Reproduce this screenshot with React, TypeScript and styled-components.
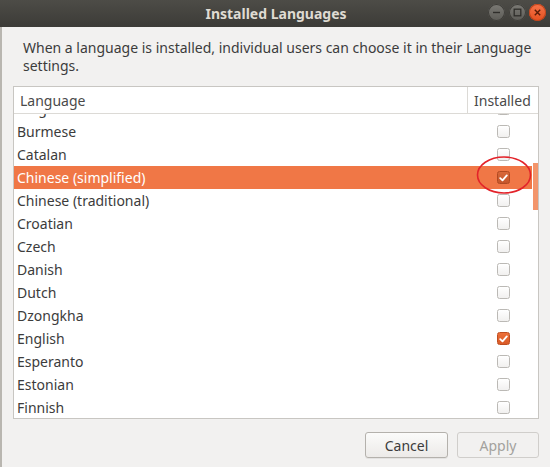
import React from "react";
import styled, { createGlobalStyle } from "styled-components";

const Global = createGlobalStyle`
  html, body { margin: 0; padding: 0; background: #f2f1f0; }
  body { font-family: "Noto Sans", "DejaVu Sans", sans-serif; }
  * { box-sizing: border-box; }
`;

const Window = styled.div`
  width: 550px;
  height: 467px;
  display: flex;
  flex-direction: column;
  background: #f2f1f0;
  overflow: hidden;
`;

const TitleBar = styled.div`
  height: 27px;
  flex: none;
  background: linear-gradient(#4d4c47, #3c3b37);
  display: flex;
  align-items: center;
  justify-content: center;
  position: relative;
`;

const Title = styled.div`
  color: #dfdbd2;
  font-weight: bold;
  font-size: 14px;
  letter-spacing: 0;
  margin-left: 2px;
`;

const Controls = styled.div`
  position: absolute;
  right: 4px;
  top: 4px;
  display: flex;
  gap: 3.5px;
`;

const Ctl = styled.div<{ $close?: boolean }>`
  width: 17px;
  height: 17px;
  border-radius: 50%;
  display: flex;
  align-items: center;
  justify-content: center;
  background: ${(p) =>
    p.$close
      ? "linear-gradient(#f5744a, #e4501f)"
      : "linear-gradient(#7b7a75, #5c5b56)"};
  box-shadow: inset 0 0 0 1px ${(p) => (p.$close ? "#c0441c" : "#3e3d39")};
`;

const Body = styled.div`
  flex: 1;
  display: flex;
  flex-direction: column;
  padding: 12px 11px 9px 11px;
  border-left: 2px solid #b9b6b0;
  min-height: 0;
`;

const Description = styled.p`
  margin: 0 0 11px 10px;
  font-size: 14px;
  line-height: 18px;
  color: #3c3c3c;
`;

const Table = styled.div`
  border: 1px solid #c8c6c2;
  background: #ffffff;
  display: flex;
  flex-direction: column;
  height: 333px;
  flex: none;
`;

const HeaderRow = styled.div`
  display: grid;
  grid-template-columns: 453px 1fr;
  height: 27px;
  border-bottom: 1px solid #dcdad6;
  flex: none;
`;

const HeaderCell = styled.div<{ $divider?: boolean }>`
  display: flex;
  align-items: center;
  padding-left: 6px;
  font-size: 14px;
  color: #4a4a4a;
  border-left: ${(p) => (p.$divider ? "1px solid #dcdad6" : "none")};
`;

const Viewport = styled.div`
  flex: 1;
  display: flex;
  overflow: hidden;
  min-height: 0;
`;

const List = styled.div`
  flex: 1;
  margin-top: -17px;
  margin-right: 1px;
`;

const Row = styled.div<{ $selected?: boolean }>`
  height: 23px;
  display: grid;
  grid-template-columns: 453px 1fr;
  align-items: center;
  background: ${(p) => (p.$selected ? "#f07746" : "transparent")};
  color: ${(p) => (p.$selected ? "#ffffff" : "#3c3c3c")};
  font-size: 14px;
  position: relative;
`;

const Name = styled.div`
  padding-left: 3px;
  white-space: nowrap;
`;

const CheckCell = styled.div`
  display: flex;
  align-items: center;
  padding-left: 30px;
`;

const Box = styled.div<{ $checked?: boolean; $dim?: boolean }>`
  width: 13px;
  height: 13px;
  border-radius: 2.5px;
  display: flex;
  align-items: center;
  justify-content: center;
  background: ${(p) =>
    p.$checked
      ? p.$dim
        ? "linear-gradient(#d8683a, #c5552a)"
        : "linear-gradient(#ec6f38, #d95a27)"
      : "linear-gradient(#ffffff, #f1f0ef)"};
  border: 1px solid
    ${(p) => (p.$checked ? (p.$dim ? "#b04a22" : "#c04d1f") : "#bbb9b5")};
`;

const Track = styled.div`
  width: 5px;
  flex: none;
  display: flex;
  flex-direction: column;
`;

const Thumb = styled.div`
  margin-top: 49px;
  height: 47px;
  background: #f3956b;
`;

const Circle = styled.svg`
  position: absolute;
  left: 461px;
  top: -11px;
  pointer-events: none;
`;

const Footer = styled.div`
  flex: 1;
  display: flex;
  justify-content: flex-end;
  align-items: flex-end;
  gap: 9px;
`;

const Button = styled.button<{ $disabled?: boolean }>`
  width: ${(p) => (p.$disabled ? "82px" : "83px")};
  height: 26px;
  border-radius: 3px;
  font-family: "Noto Sans", "DejaVu Sans", sans-serif;
  font-size: 14px;
  padding: 0;
  color: ${(p) => (p.$disabled ? "#a3a19d" : "#3c3c3c")};
  border: 1px solid ${(p) => (p.$disabled ? "#d0cecb" : "#b4b1ac")};
  background: ${(p) =>
    p.$disabled ? "#f2f1f0" : "linear-gradient(#fbfbfa, #eceae8)"};
  box-shadow: ${(p) => (p.$disabled ? "none" : "0 1px 0 rgba(0,0,0,0.06)")};
`;

const Check = () => (
  <svg width="9" height="8" viewBox="0 0 9 8">
    <path d="M1.2 4.2 L3.5 6.4 L7.8 1.4" fill="none" stroke="#ffffff" strokeWidth="1.8" strokeLinecap="round" strokeLinejoin="round" />
  </svg>
);

const languages: { name: string; checked?: boolean; selected?: boolean }[] = [
  { name: "Bulgarian" },
  { name: "Burmese" },
  { name: "Catalan" },
  { name: "Chinese (simplified)", checked: true, selected: true },
  { name: "Chinese (traditional)" },
  { name: "Croatian" },
  { name: "Czech" },
  { name: "Danish" },
  { name: "Dutch" },
  { name: "Dzongkha" },
  { name: "English", checked: true },
  { name: "Esperanto" },
  { name: "Estonian" },
  { name: "Finnish" },
];

export default function App() {
  return (
    <Window>
      <Global />
      <TitleBar>
        <Title>Installed Languages</Title>
        <Controls>
          <Ctl>
            <svg width="9" height="9" viewBox="0 0 9 9">
              <path d="M1 4.5 H8" stroke="#2f2e2b" strokeWidth="1.4" />
            </svg>
          </Ctl>
          <Ctl>
            <svg width="9" height="9" viewBox="0 0 9 9">
              <rect x="1.2" y="1.2" width="6.6" height="6.6" fill="none" stroke="#2f2e2b" strokeWidth="1.3" />
            </svg>
          </Ctl>
          <Ctl $close>
            <svg width="9" height="9" viewBox="0 0 9 9">
              <path d="M1.8 1.8 L7.2 7.2 M7.2 1.8 L1.8 7.2" stroke="#5a1c08" strokeWidth="1.4" />
            </svg>
          </Ctl>
        </Controls>
      </TitleBar>
      <Body>
        <Description>
          When a language is installed, individual users can choose it in their Language settings.
        </Description>
        <Table>
          <HeaderRow>
            <HeaderCell>Language</HeaderCell>
            <HeaderCell $divider>Installed</HeaderCell>
          </HeaderRow>
          <Viewport>
            <List>
              {languages.map((l) => (
                <Row key={l.name} $selected={l.selected}>
                  <Name>{l.name}</Name>
                  <CheckCell>
                    <Box $checked={l.checked} $dim={l.selected}>
                      {l.checked && <Check />}
                    </Box>
                  </CheckCell>
                  {l.selected && (
                    <Circle width="58" height="40" viewBox="0 0 58 40">
                      <ellipse cx="29" cy="20" rx="26.5" ry="18" fill="none" stroke="#e3232a" strokeWidth="1.6" />
                    </Circle>
                  )}
                </Row>
              ))}
            </List>
            <Track>
              <Thumb />
            </Track>
          </Viewport>
        </Table>
        <Footer>
          <Button>Cancel</Button>
          <Button $disabled disabled>
            Apply
          </Button>
        </Footer>
      </Body>
    </Window>
  );
}
